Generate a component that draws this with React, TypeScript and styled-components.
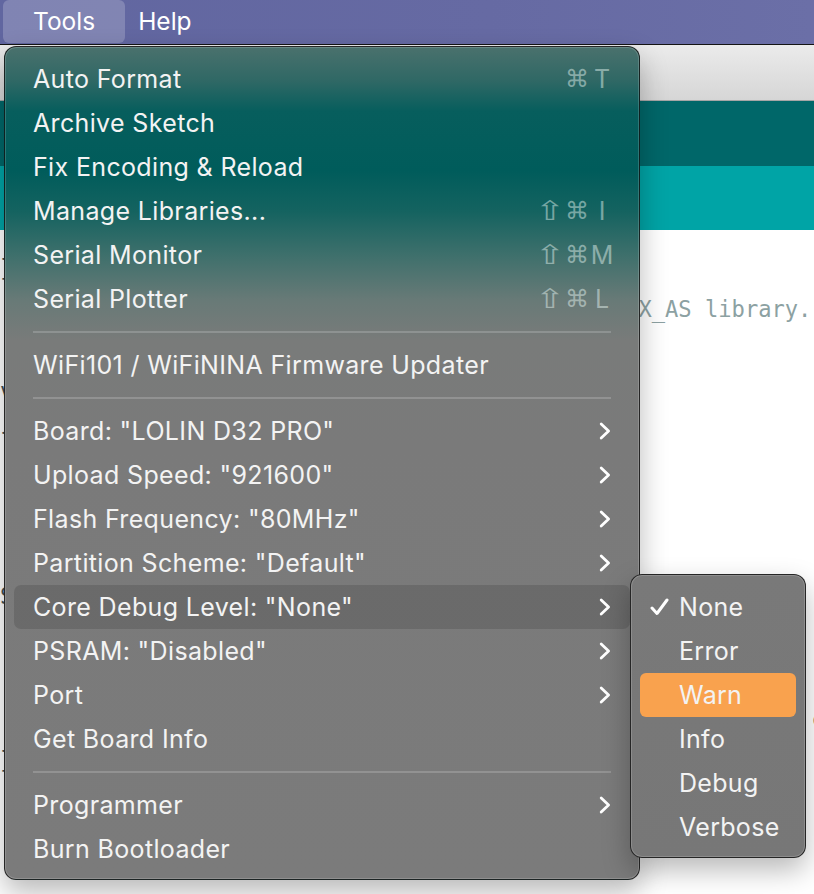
import React from "react";
import styled, { createGlobalStyle } from "styled-components";

const GlobalStyle = createGlobalStyle`
  html, body { margin: 0; padding: 0; background: #ffffff; }
  body {
    overflow: hidden;
    font-family: Inter, "Noto Sans", sans-serif;
    -webkit-font-smoothing: antialiased;
  }
  * { box-sizing: border-box; }
`;

const Screen = styled.div`
  position: relative;
  width: 814px;
  height: 894px;
  overflow: hidden;
  display: flex;
  flex-direction: column;
  background: #ffffff;
`;

const MenuBar = styled.div`
  flex: none;
  height: 45px;
  border-bottom: 1px solid #141414;
  background: linear-gradient(90deg, #6166a0 0%, #666aa3 60%, #6b6fa7 100%);
  display: flex;
  align-items: stretch;
  padding: 0 0 1px 3px;
`;

const MenuTitle = styled.div<{ $active?: boolean }>`
  display: flex;
  align-items: center;
  padding: 0 ${(p) => (p.$active ? "30px" : "13px")} 2px;
  font-size: 24.5px;
  color: #ffffff;
  border-radius: 6px;
  background: ${(p) => (p.$active ? "rgba(255,255,255,0.2)" : "transparent")};
`;

const Window = styled.div`
  flex: 1;
  display: flex;
  flex-direction: column;
`;

const TitleBar = styled.div`
  flex: none;
  height: 56px;
  background: linear-gradient(180deg, #ebebeb 0%, #d6d6d6 100%);
  border-bottom: 1px solid #a6a6a6;
`;

const Toolbar = styled.div`
  flex: none;
  height: 65px;
  background: #006769;
`;

const TabBar = styled.div`
  flex: none;
  height: 64px;
  background: #00a4a6;
`;

const Editor = styled.div`
  flex: 1;
  background: #ffffff;
  padding-top: 18px;
  font-family: "DejaVu Sans Mono", "Liberation Mono", monospace;
  font-size: 22.1px;
  line-height: 41px;
`;

const CodeLine = styled.div<{ $comment?: boolean; $indent?: number }>`
  height: 41px;
  white-space: pre;
  padding-left: ${(p) => p.$indent ?? 0}ch;
  color: ${(p) => (p.$comment ? "#8ca1a2" : "#434f54")};
`;

const DropMenu = styled.div`
  position: absolute;
  left: 4px;
  top: 46px;
  width: 636px;
  padding: 10px 0 8px;
  border-radius: 12px;
  border: 1px solid rgba(18, 18, 18, 0.8);
  box-shadow: inset 0 0 0 1px rgba(255, 255, 255, 0.16),
    0 12px 28px rgba(0, 0, 0, 0.28);
  background: linear-gradient(
    180deg,
    #4a716d 0px,
    #2f6865 34px,
    #075e5d 64px,
    #005c5b 124px,
    #156360 165px,
    #3f706c 209px,
    #687a77 253px,
    #797b7a 294px,
    #7a7a7a 400px,
    #7b7b7b 100%
  );
  display: flex;
  flex-direction: column;
`;

const SubMenu = styled.div`
  position: absolute;
  left: 630px;
  top: 574px;
  width: 176px;
  padding: 10px 0 8px;
  border-radius: 12px;
  border: 1px solid rgba(18, 18, 18, 0.8);
  box-shadow: inset 0 0 0 1px rgba(255, 255, 255, 0.16),
    0 12px 28px rgba(0, 0, 0, 0.28);
  background: linear-gradient(180deg, #797979 0%, #777777 100%);
  display: flex;
  flex-direction: column;
`;

const Row = styled.div<{ $highlight?: boolean }>`
  height: 44px;
  margin: 0 9px;
  padding: 0 19px;
  border-radius: 7px;
  display: flex;
  align-items: center;
  justify-content: space-between;
  font-size: 25px;
  letter-spacing: 0.35px;
  color: #f3f3f3;
  background: ${(p) => (p.$highlight ? "rgba(0,0,0,0.13)" : "transparent")};
`;

const SubRow = styled.div<{ $active?: boolean }>`
  height: 44px;
  margin: 0 9px;
  border-radius: 6px;
  display: flex;
  align-items: center;
  font-size: 25px;
  letter-spacing: 0.3px;
  color: #f3f3f3;
  background: ${(p) => (p.$active ? "#f9a24e" : "transparent")};
`;

const CheckSlot = styled.div`
  width: 39px;
  flex: none;
  padding-left: 10px;
  display: flex;
  align-items: center;
`;

const Separator = styled.div`
  height: 22px;
  display: flex;
  align-items: center;
  padding: 0 28px;
  &::after {
    content: "";
    flex: 1;
    height: 2px;
    background: rgba(255, 255, 255, 0.18);
  }
`;

const Shortcut = styled.div`
  display: grid;
  grid-template-columns: 22px 22px 18px;
  column-gap: 5px;
  justify-items: center;
  align-items: center;
  color: rgba(232, 246, 242, 0.47);
  font-size: 25px;
  letter-spacing: 0;
`;

const Glyph = styled.span<{ $wide?: boolean }>`
  font-family: "DejaVu Sans", sans-serif;
  font-size: 24px;
  display: inline-block;
  transform: ${(p) => (p.$wide ? "scale(1.5, 1.12)" : "none")};
`;

const Chevron = () => (
  <svg width="12" height="18" viewBox="0 0 12 18">
    <path
      d="M2.2 2 L9.6 9 L2.2 16"
      fill="none"
      stroke="#ffffff"
      strokeWidth="2.8"
      strokeLinecap="round"
      strokeLinejoin="round"
    />
  </svg>
);

const Check = () => (
  <svg width="19" height="18" viewBox="0 0 19 18">
    <path
      d="M2 10 L7 15.5 L17 2"
      fill="none"
      stroke="#ffffff"
      strokeWidth="3"
      strokeLinecap="round"
      strokeLinejoin="round"
    />
  </svg>
);

type Item =
  | { kind: "sep" }
  | {
      kind: "item";
      label: string;
      keys?: [string, string, string];
      sub?: boolean;
      highlight?: boolean;
    };

const items: Item[] = [
  { kind: "item", label: "Auto Format", keys: ["", "⌘", "T"] },
  { kind: "item", label: "Archive Sketch" },
  { kind: "item", label: "Fix Encoding & Reload" },
  { kind: "item", label: "Manage Libraries...", keys: ["⇧", "⌘", "I"] },
  { kind: "item", label: "Serial Monitor", keys: ["⇧", "⌘", "M"] },
  { kind: "item", label: "Serial Plotter", keys: ["⇧", "⌘", "L"] },
  { kind: "sep" },
  { kind: "item", label: "WiFi101 / WiFiNINA Firmware Updater" },
  { kind: "sep" },
  { kind: "item", label: 'Board: "LOLIN D32 PRO"', sub: true },
  { kind: "item", label: 'Upload Speed: "921600"', sub: true },
  { kind: "item", label: 'Flash Frequency: "80MHz"', sub: true },
  { kind: "item", label: 'Partition Scheme: "Default"', sub: true },
  { kind: "item", label: 'Core Debug Level: "None"', sub: true, highlight: true },
  { kind: "item", label: 'PSRAM: "Disabled"', sub: true },
  { kind: "item", label: "Port", sub: true },
  { kind: "item", label: "Get Board Info" },
  { kind: "sep" },
  { kind: "item", label: "Programmer", sub: true },
  { kind: "item", label: "Burn Bootloader" },
];

const levels = ["None", "Error", "Warn", "Info", "Debug", "Verbose"];

/* Only the parts of the sketch that peek out around the menus are written. */
const code: { text: string; comment?: boolean; indent?: number }[] = [
  { text: "}" },
  { text: "X_AS library.", comment: true, indent: 48 },
  { text: "" },
  { text: "v" },
  { text: "{" },
  { text: "" },
  { text: "" },
  { text: "" },
  { text: "S" },
  { text: "" },
  { text: "" },
  { text: "c", indent: 61 },
  { text: "}" },
  { text: "" },
  { text: "" },
];

export default function App() {
  return (
    <>
      <GlobalStyle />
      <Screen>
        <MenuBar>
          <MenuTitle $active>Tools</MenuTitle>
          <MenuTitle>Help</MenuTitle>
        </MenuBar>
        <Window>
          <TitleBar />
          <Toolbar />
          <TabBar />
          <Editor>
            {code.map((l, i) => (
              <CodeLine key={i} $comment={l.comment} $indent={l.indent}>
                {l.text}
              </CodeLine>
            ))}
          </Editor>
        </Window>

        <DropMenu>
          {items.map((it, i) =>
            it.kind === "sep" ? (
              <Separator key={i} />
            ) : (
              <Row key={i} $highlight={it.highlight}>
                <span>{it.label}</span>
                {it.keys && (
                  <Shortcut>
                    <Glyph $wide>{it.keys[0]}</Glyph>
                    <Glyph>{it.keys[1]}</Glyph>
                    <span>{it.keys[2]}</span>
                  </Shortcut>
                )}
                {it.sub && <Chevron />}
              </Row>
            )
          )}
        </DropMenu>

        <SubMenu>
          {levels.map((lv) => (
            <SubRow key={lv} $active={lv === "Warn"}>
              <CheckSlot>{lv === "None" && <Check />}</CheckSlot>
              <span>{lv}</span>
            </SubRow>
          ))}
        </SubMenu>
      </Screen>
    </>
  );
}
